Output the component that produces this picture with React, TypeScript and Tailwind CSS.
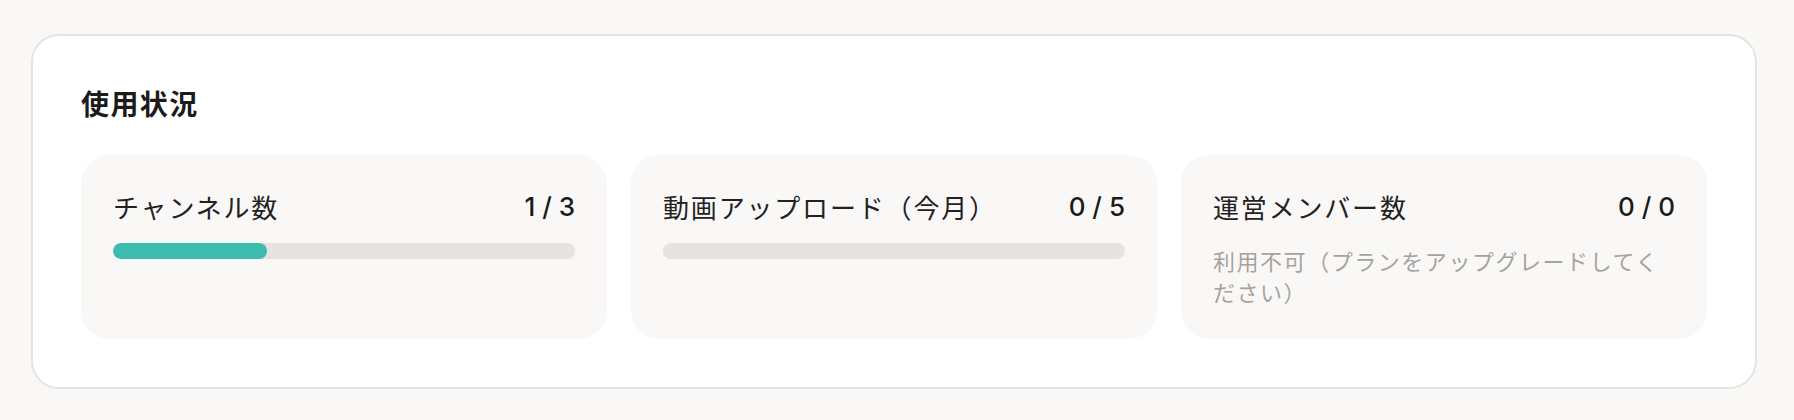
const usage = [
  { id: "channels", label: "チャンネル数", used: 1, limit: 3, note: null as string | null },
  { id: "uploads", label: "動画アップロード（今月）", used: 0, limit: 5, note: null },
  {
    id: "members",
    label: "運営メンバー数",
    used: 0,
    limit: 0,
    note: "利用不可（プランをアップグレードしてください）",
  },
];

function UsageCard({ item }: { item: (typeof usage)[number] }) {
  const pct = item.limit > 0 ? (item.used / item.limit) * 100 : 0;
  return (
    <div className="rounded-[28px] bg-[#f9f8f6] p-8">
      <div className="flex items-center justify-between">
        <span className="text-[26px] leading-10 tracking-[0.07em] text-[#22211f]">{item.label}</span>
        <span className="font-['Inter','Noto_Sans_CJK_JP',sans-serif] text-[26px] leading-10 font-medium text-[#1c1b1a]">
          {item.used} / {item.limit}
        </span>
      </div>
      {item.note ? (
        <p className="mt-[18px] text-[22px] leading-[31px] tracking-[0.07em] text-[#a6a39e]">{item.note}</p>
      ) : (
        <div className="mt-4 h-4 w-full overflow-hidden rounded-full bg-[#e5e4e2]">
          <div className="h-full rounded-full bg-[#3cbcaf]" style={{ width: `${pct}%` }}></div>
        </div>
      )}
    </div>
  );
}

export default function App() {
  return (
    <div className="min-h-[420px] bg-[#f9f8f6] pt-[34px] pr-[37px] pb-8 pl-[31px] font-['Noto_Sans_CJK_JP',sans-serif]">
      <section className="rounded-[28px] border-2 border-[#e6e4e0] bg-white px-12 pt-[47px] pb-12">
        <h2 className="mb-8 text-[28px] leading-10 font-bold tracking-wider text-[#1c1b1a]">使用状況</h2>
        <div className="grid grid-cols-3 gap-6">
          {usage.map((u) => (
            <UsageCard key={u.id} item={u} />
          ))}
        </div>
      </section>
    </div>
  );
}
